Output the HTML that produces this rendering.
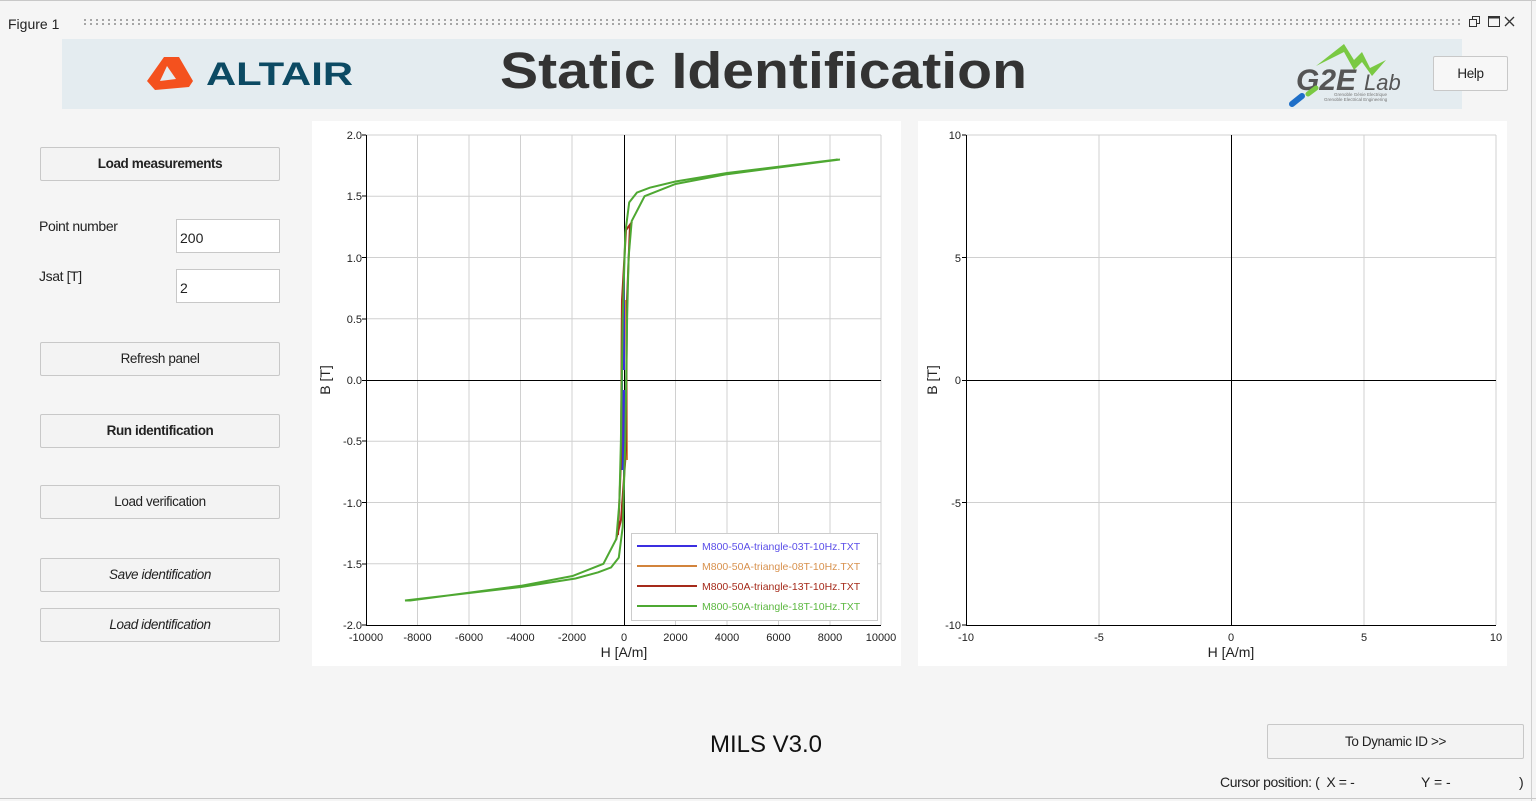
<!DOCTYPE html>
<html><head><meta charset="utf-8"><style>
body{margin:0;width:1536px;height:801px;background:#f5f5f5;font-family:"Liberation Sans",sans-serif;position:relative;overflow:hidden;color:#222}
.a{position:absolute}
.btn{position:absolute;left:40px;width:238px;height:32px;border:1px solid #c8c8c8;background:#f3f3f3;border-radius:2px;font-size:13.5px;text-align:center;line-height:32px;letter-spacing:-0.4px}
.inp{position:absolute;left:176px;border:1px solid #c8c8c8;background:#fff;font-size:14px;line-height:36px;padding-left:3px;box-sizing:border-box;height:34px;width:104px}
.lbl{position:absolute;left:39px;font-size:14px;letter-spacing:-0.4px}
</style></head><body>
<div class="a" style="left:0;top:0;width:1536px;height:1px;background:#c8c8c8"></div>
<div class="a" style="left:1531px;top:0;width:1px;height:801px;background:#d0d0d0"></div>
<div class="a" style="left:0;top:798px;width:1536px;height:1px;background:#c8c8c8"></div>
<div class="a" style="left:8px;top:16px;font-size:14px">Figure 1</div>
<div class="a" style="left:82px;top:18px;width:1380px;height:8px;background-image:radial-gradient(circle,#999 0.9px,transparent 1.2px);background-size:6px 4px"></div>
<svg class="a" style="left:1466px;top:14px" width="60" height="16" viewBox="0 0 60 16">
<rect x="3.5" y="5.5" width="7" height="7" fill="none" stroke="#333"/><path d="M6.5 5.5V2.5H13.5V9.5H10.5" fill="none" stroke="#333"/>
<rect x="22.5" y="2.5" width="11" height="10" fill="none" stroke="#333"/><rect x="22.5" y="2.5" width="11" height="2" fill="#333"/>
<path d="M39 3L48 12M48 3L39 12" stroke="#333" stroke-width="1.3"/></svg>
<div class="a" style="left:62px;top:39px;width:1400px;height:70px;background:#e4ecf0"></div>
<svg class="a" style="left:140px;top:52px" width="220" height="42" viewBox="0 0 220 42">
<path d="M24 5L7 29L15 38L49 35L53 29L39 5Z M27 14L36 27L20 29Z" fill="#f4511e" fill-rule="evenodd"/>
<text x="66" y="33" font-family="Liberation Sans" font-weight="bold" font-size="32" fill="#0c4a63" textLength="147" lengthAdjust="spacingAndGlyphs">ALTAIR</text></svg>
<svg class="a" style="left:495px;top:40px" width="540" height="62"><text x="5" y="48" font-family="Liberation Sans" font-weight="bold" font-size="51" fill="#333" textLength="527" lengthAdjust="spacingAndGlyphs">Static Identification</text></svg>
<svg class="a" style="left:1286px;top:38px" width="130" height="72" viewBox="0 0 130 72">
<path d="M30 28L58 6L68 22L76 14L84 30L100 22L86 38L76 24L68 32L58 14Z" fill="#7ac943"/>
<text x="10" y="52" font-family="Liberation Sans" font-weight="bold" font-style="italic" font-size="30" fill="#555">G2E</text>
<text x="78" y="52" font-family="Liberation Sans" font-style="italic" font-size="22" fill="#555">Lab</text>
<text x="48" y="58" font-family="Liberation Sans" font-size="4.5" fill="#777">Grenoble Génie Electrique</text>
<text x="38" y="63" font-family="Liberation Sans" font-size="4.5" fill="#777">Grenoble Electrical Engineering</text>
<path d="M6 66L16 58" stroke="#1e6fc8" stroke-width="6" stroke-linecap="round"/><path d="M22 56L30 50" stroke="#7ac943" stroke-width="5" stroke-linecap="round"/></svg>
<div class="btn" style="left:1433px;top:56px;width:73px;height:33px;line-height:33px;background:#f7f7f7">Help</div>

<div class="btn" style="top:147px;font-weight:bold">Load measurements</div>
<div class="lbl" style="top:218px">Point number</div>
<div class="inp" style="top:219px">200</div>
<div class="lbl" style="top:268px">Jsat [T]</div>
<div class="inp" style="top:269px">2</div>
<div class="btn" style="top:342px">Refresh panel</div>
<div class="btn" style="top:414px;font-weight:bold">Run identification</div>
<div class="btn" style="top:485px">Load verification</div>
<div class="btn" style="top:558px;font-style:italic">Save identification</div>
<div class="btn" style="top:608px;font-style:italic">Load identification</div>

<svg class="a" style="left:0;top:0" width="1536" height="801" font-family="Liberation Sans" font-size="11" fill="#222">
<rect x="312" y="121" width="589" height="545" fill="#fff"/>
<rect x="918" y="121" width="589" height="545" fill="#fff"/>
<g stroke="#d0d0d0" stroke-width="1" fill="none">
<path d="M417.5 135V625M469 135V625M520.5 135V625M572 135V625M675.5 135V625M727 135V625M778.5 135V625M830 135V625M881 135V625"/>
<path d="M366 135H881M366 196.25H881M366 257.5H881M366 318.75H881M366 441.25H881M366 502.5H881M366 563.75H881"/>
<path d="M1099 135V625M1364 135V625M1496 135V625M966 135H1496M966 257.5H1496M966 502.5H1496"/>
</g>
<g stroke="#000" stroke-width="1" fill="none">
<path d="M624.5 135V625M366 380.5H881M366.5 135V625.5H881"/>
<path d="M1231.5 135V625M966 380.5H1496M966.5 135V625.5H1496"/>
<path d="M362 135H366M362 196H366M362 257.5H366M362 319H366M362 380.5H366M362 441H366M362 502.5H366M362 564H366M362 625H366"/>
<path d="M962 135H966M962 257.5H966M962 380.5H966M962 502.5H966M962 625H966"/>
</g>
<g text-anchor="end">
<text x="362" y="139">2.0</text><text x="362" y="200">1.5</text><text x="362" y="262">1.0</text><text x="362" y="323">0.5</text><text x="362" y="384">0.0</text><text x="362" y="445">-0.5</text><text x="362" y="507">-1.0</text><text x="362" y="568">-1.5</text><text x="362" y="629">-2.0</text>
<text x="961" y="139">10</text><text x="961" y="262">5</text><text x="961" y="384">0</text><text x="961" y="507">-5</text><text x="961" y="629">-10</text>
</g>
<g text-anchor="middle">
<text x="366" y="641">-10000</text><text x="417.5" y="641">-8000</text><text x="469" y="641">-6000</text><text x="520.5" y="641">-4000</text><text x="572" y="641">-2000</text><text x="624" y="641">0</text><text x="675.5" y="641">2000</text><text x="727" y="641">4000</text><text x="778.5" y="641">6000</text><text x="830" y="641">8000</text><text x="881" y="641">10000</text>
<text x="966" y="641">-10</text><text x="1099" y="641">-5</text><text x="1231" y="641">0</text><text x="1364" y="641">5</text><text x="1496" y="641">10</text>
<text x="624" y="657" font-size="14">H [A/m]</text><text x="1231" y="657" font-size="14">H [A/m]</text>
<text transform="translate(330 380) rotate(-90)" font-size="14">B [T]</text>
<text transform="translate(937 380) rotate(-90)" font-size="14">B [T]</text>
</g>
<g fill="none" stroke-width="2">
<path d="M624 270V370M624 390V490M622 470V330" stroke="#3b2ee0"/>
<path d="M622 300L621 460M627 460L626 300" stroke="#d2843c"/>
<path d="M630 225L627 300L626 450L621 520L616 540M618 535L621 460L622 300L626 230L632 222" stroke="#a52a1a"/>
<path d="M837.7 159.5L727 173L675.5 181.5L649.8 187.7L636.9 192.6L629.2 202.4L625.3 233L622.7 318.8L620.9 441L619.4 502.5L616.3 539L603.4 563.8L572.5 576L521 585.8L410.3 600.5L405 600.5L521 587L575.5 578.5L598.2 572.3L611.1 567.4L618.8 557.6L622.7 527L625.3 441.2L627.1 319L628.6 257.5L631.7 221L644.6 196.2L675.5 184L727 174.2L840 159.5" stroke="#4ea832"/>
</g>
<rect x="631.5" y="533.5" width="246" height="87" fill="#fff" stroke="#ccc"/>
<g stroke-width="2"><path d="M637 546H697" stroke="#3b2ee0"/><path d="M637 566H697" stroke="#d2843c"/><path d="M637 586H697" stroke="#a52a1a"/><path d="M637 606H697" stroke="#4ea832"/></g>
<g font-size="10.5"><text x="702" y="550" fill="#5a4ee8">M800-50A-triangle-03T-10Hz.TXT</text><text x="702" y="570" fill="#d8924e">M800-50A-triangle-08T-10Hz.TXT</text><text x="702" y="590" fill="#a52a1a">M800-50A-triangle-13T-10Hz.TXT</text><text x="702" y="610" fill="#5cb840">M800-50A-triangle-18T-10Hz.TXT</text></g>
</svg>

<div class="a" style="left:666px;top:731px;width:200px;text-align:center;font-size:24px;color:#111">MILS V3.0</div>
<div class="btn" style="left:1267px;top:724px;width:255px;height:33px;line-height:33px">To Dynamic ID &gt;&gt;</div>
<div class="a" style="left:1220px;top:774px;font-size:14px;letter-spacing:-0.4px">Cursor position: (&nbsp; X = -</div>
<div class="a" style="left:1421px;top:774px;font-size:14px">Y = -</div>
<div class="a" style="left:1519px;top:774px;font-size:14px">)</div>
</body></html>
